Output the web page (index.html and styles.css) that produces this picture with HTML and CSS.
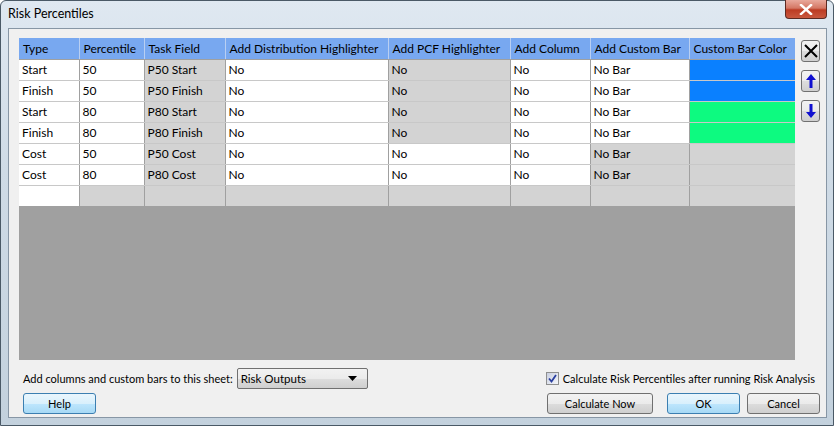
FILE: index.html
```html
<!DOCTYPE html>
<html lang="en">
<head>
    <meta charset="UTF-8">
    <title>Risk Percentiles</title>
    <link rel="stylesheet" href="styles.css">
</head>
<body>
    <div class="window">
        <div class="titlebar">
            <span class="title">Risk Percentiles</span>
            <button class="close-btn" aria-label="Close">
                <svg width="14" height="11" viewBox="0 0 14 11">
                    <path d="M2 1 L12 10 M12 1 L2 10" stroke="#ffffff" stroke-width="2.4" stroke-linecap="square"/>
                </svg>
            </button>
        </div>

        <div class="client">
            <div class="top-area">
                <!-- Grid -->
                <div class="grid">
                    <table class="sheet">
                        <colgroup>
                            <col class="c-type">
                            <col class="c-pct">
                            <col class="c-field">
                            <col class="c-dist">
                            <col class="c-pcf">
                            <col class="c-col">
                            <col class="c-bar">
                            <col class="c-color">
                        </colgroup>
                        <thead>
                            <tr>
                                <th>Type</th>
                                <th>Percentile</th>
                                <th>Task Field</th>
                                <th>Add Distribution Highlighter</th>
                                <th>Add PCF Highlighter</th>
                                <th>Add Column</th>
                                <th>Add Custom Bar</th>
                                <th>Custom Bar Color</th>
                            </tr>
                        </thead>
                        <tbody>
                            <tr>
                                <td>Start</td><td>50</td><td class="ro">P50 Start</td><td>No</td>
                                <td class="ro">No</td><td>No</td><td>No Bar</td><td class="blue"></td>
                            </tr>
                            <tr>
                                <td>Finish</td><td>50</td><td class="ro">P50 Finish</td><td>No</td>
                                <td class="ro">No</td><td>No</td><td>No Bar</td><td class="blue"></td>
                            </tr>
                            <tr>
                                <td>Start</td><td>80</td><td class="ro">P80 Start</td><td>No</td>
                                <td class="ro">No</td><td>No</td><td>No Bar</td><td class="green"></td>
                            </tr>
                            <tr>
                                <td>Finish</td><td>80</td><td class="ro">P80 Finish</td><td>No</td>
                                <td class="ro">No</td><td>No</td><td>No Bar</td><td class="green"></td>
                            </tr>
                            <tr>
                                <td>Cost</td><td>50</td><td class="ro">P50 Cost</td><td>No</td>
                                <td>No</td><td>No</td><td class="ro">No Bar</td><td class="ro"></td>
                            </tr>
                            <tr>
                                <td>Cost</td><td>80</td><td class="ro">P80 Cost</td><td>No</td>
                                <td>No</td><td>No</td><td class="ro">No Bar</td><td class="ro"></td>
                            </tr>
                            <tr class="new-row">
                                <td></td><td class="ro"></td><td class="ro"></td><td class="ro"></td>
                                <td class="ro"></td><td class="ro"></td><td class="ro"></td><td class="ro"></td>
                            </tr>
                        </tbody>
                    </table>
                </div>

                <!-- Row tools -->
                <div class="tools">
                    <button class="tool-btn" aria-label="Delete row">
                        <svg width="16" height="16" viewBox="0 0 16 16">
                            <path d="M2 2 L14 14 M14 2 L2 14" stroke="#000" stroke-width="2"/>
                        </svg>
                    </button>
                    <button class="tool-btn" aria-label="Move up">
                        <svg width="16" height="18" viewBox="0 0 16 18">
                            <path d="M8 2 L3 8 H6.5 V16 H9.5 V8 H13 Z" fill="#1010d0"/>
                        </svg>
                    </button>
                    <button class="tool-btn" aria-label="Move down">
                        <svg width="16" height="18" viewBox="0 0 16 18">
                            <path d="M8 16 L3 10 H6.5 V2 H9.5 V10 H13 Z" fill="#1010d0"/>
                        </svg>
                    </button>
                </div>
            </div>

            <div class="options">
                <div class="sheet-pick">
                    <label for="sheet">Add columns and custom bars to this sheet:</label>
                    <div class="combo" id="sheet">
                        <span>Risk Outputs</span>
                        <svg width="9" height="5" viewBox="0 0 9 5"><path d="M0 0 H9 L4.5 5 Z" fill="#000"/></svg>
                    </div>
                </div>
                <label class="check">
                    <span class="box">
                        <svg width="9" height="9" viewBox="0 0 9 9">
                            <path d="M1 4.5 L3.5 7.5 L8 1" stroke="#2a3fa0" stroke-width="1.8" fill="none"/>
                        </svg>
                    </span>
                    Calculate Risk Percentiles after running Risk Analysis
                </label>
            </div>

            <div class="actions">
                <button class="btn btn-default">Help</button>
                <div class="right-buttons">
                    <button class="btn btn-calc">Calculate Now</button>
                    <button class="btn btn-default btn-ok">OK</button>
                    <button class="btn">Cancel</button>
                </div>
            </div>
        </div>
    </div>
</body>
</html>
```

FILE: styles.css
```css
* {
    box-sizing: border-box;
}
html, body {
    margin: 0;
    padding: 0;
}
body {
    width: 834px;
    height: 426px;
    overflow: hidden;
    font-family: Lato, "Noto Sans", sans-serif;
    font-size: 12px;
    color: #000;
    background: #ffffff;
}
.window {
    width: 834px;
    height: 426px;
    display: flex;
    flex-direction: column;
    border: 1px solid #4a5966;
    border-radius: 6px 6px 0 0;
    background: linear-gradient(180deg, #dfe8f1 0%, #cfdbe6 40%, #c3d1dd 100%);
}
.titlebar {
    height: 27px;
    display: flex;
    align-items: flex-start;
    justify-content: space-between;
    padding: 0 6px 0 7px;
}
.title {
    margin-top: 5px;
    font-size: 12.5px;
    color: #000;
}
.close-btn {
    width: 42px;
    height: 19px;
    margin-top: -1px;
    border: 1px solid #5c2a22;
    border-top: none;
    border-radius: 0 0 4px 4px;
    background: linear-gradient(180deg, #e9a99c 0%, #d47764 45%, #bc3b23 55%, #c9583e 100%);
    display: flex;
    align-items: center;
    justify-content: center;
    padding: 0;
}
.client {
    flex: 1;
    margin: 0 6px 7px 7px;
    background: #f0f0f0;
    border: 1px solid #8796a5;
    padding: 9px 6px 0 10px;
    display: flex;
    flex-direction: column;
    font-size: 11px;
}
.top-area {
    display: flex;
    gap: 6px;
}
.grid {
    width: 777px;
    height: 322px;
    background: #a0a0a0;
    overflow: hidden;
    font-size: 12px;
}
.sheet {
    border-collapse: collapse;
    table-layout: fixed;
    width: 777px;
}
.c-type { width: 60px; }
.c-pct { width: 65px; }
.c-field { width: 81px; }
.c-dist { width: 163px; }
.c-pcf { width: 122px; }
.c-col { width: 80px; }
.c-bar { width: 99px; }
.c-color { width: 107px; }
.sheet th,
.sheet td {
    height: 21px;
    padding: 0 0 0 3px;
    text-align: left;
    font-weight: normal;
    white-space: nowrap;
    overflow: hidden;
    border-right: 1px solid #a0a0a0;
    border-bottom: 1px solid #c8c8c8;
}
.sheet th {
    background: #78a8f0;
    border-right-color: #b9cff2;
    border-bottom: 1px solid #a0a0a0;
    padding-left: 4px;
}
.sheet th:last-child,
.sheet td:last-child {
    border-right: none;
}
.sheet td {
    background: #ffffff;
}
.sheet td.ro {
    background: #d3d3d3;
}
.sheet td.blue {
    background: #0a80ff;
}
.sheet td.green {
    background: #0dfa80;
}
.new-row td {
    border-bottom: none;
}
.tools {
    display: flex;
    flex-direction: column;
    gap: 8px;
    padding-top: 2px;
}
.tool-btn {
    width: 19px;
    height: 22px;
    padding: 0;
    border: 1px solid #707070;
    border-radius: 3px;
    background: linear-gradient(180deg, #f2f2f2 0%, #ebebeb 50%, #dddddd 51%, #cfcfcf 100%);
    display: flex;
    align-items: center;
    justify-content: center;
}
.options {
    display: flex;
    justify-content: space-between;
    align-items: center;
    margin-top: 8px;
    padding-left: 4px;
    padding-right: 5px;
}
.sheet-pick {
    display: flex;
    align-items: center;
    gap: 4px;
}
.combo {
    width: 131px;
    height: 21px;
    border: 1px solid #707070;
    border-radius: 2px;
    background: linear-gradient(180deg, #f2f2f2 0%, #ebebeb 50%, #dddddd 51%, #cfcfcf 100%);
    display: flex;
    align-items: center;
    justify-content: space-between;
    padding: 0 10px 0 3px;
    font-size: 11.5px;
}
.check {
    display: flex;
    align-items: center;
    gap: 4px;
}
.box {
    width: 13px;
    height: 13px;
    border: 1px solid #8e8f8f;
    background: linear-gradient(135deg, #c9cfe0, #f4f6fa);
    display: flex;
    align-items: center;
    justify-content: center;
}
.actions {
    display: flex;
    justify-content: space-between;
    margin-top: 4px;
    padding-left: 4px;
}
.right-buttons {
    display: flex;
    gap: 7px;
}
.btn {
    height: 21px;
    width: 73px;
    font-family: inherit;
    font-size: 11px;
    padding: 0;
    border: 1px solid #707070;
    border-radius: 3px;
    background: linear-gradient(180deg, #f2f2f2 0%, #ebebeb 50%, #dddddd 51%, #cfcfcf 100%);
    color: #000;
}
.btn-default {
    border-color: #3c7fb1;
    background: linear-gradient(180deg, #eaf6fd 0%, #d9f0fc 50%, #bee6fd 51%, #a7d9f5 100%);
}
.btn-calc {
    width: 106px;
    margin-right: 7px;
}
```
